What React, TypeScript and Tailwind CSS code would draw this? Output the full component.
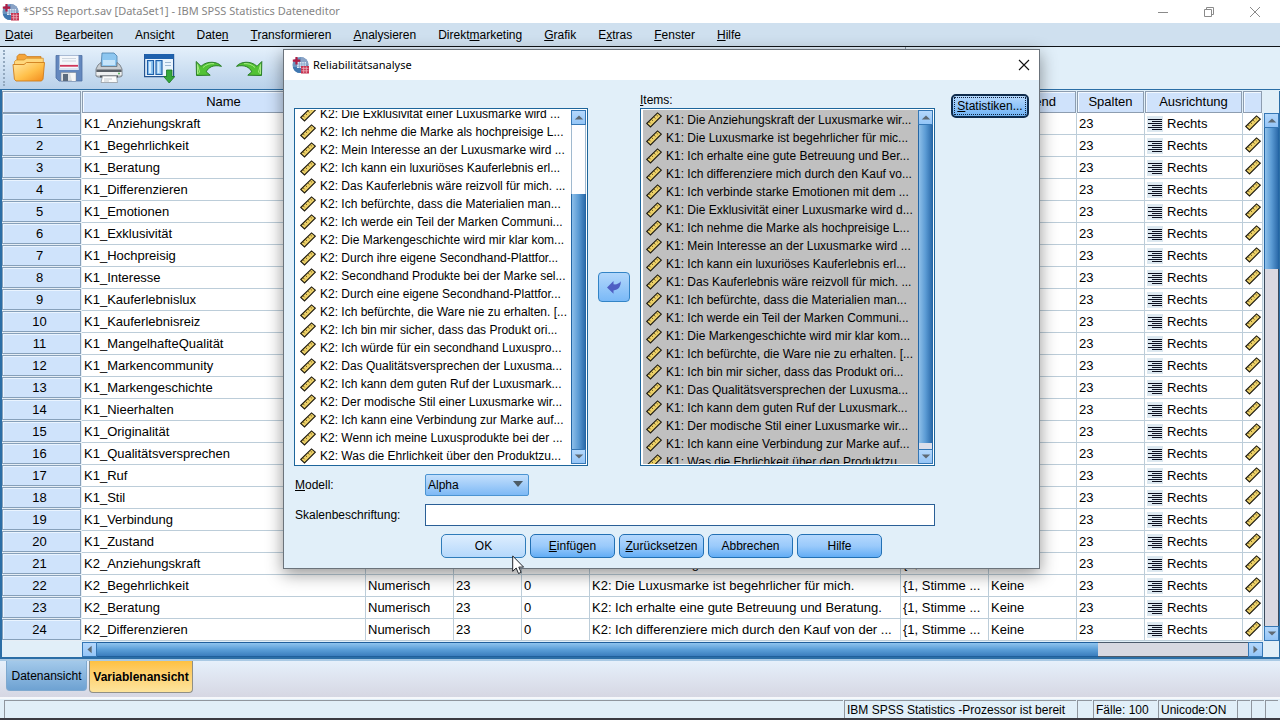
import type { ReactNode } from "react";

const K1 = [
  "Anziehungskraft", "Begehrlichkeit", "Beratung", "Differenzieren", "Emotionen", "Exklusivität", "Hochpreisig",
  "Interesse", "Kauferlebnislux", "Kauferlebnisreiz", "MangelhafteQualität", "Markencommunity", "Markengeschichte",
  "Nieerhalten", "Originalität", "Qualitätsversprechen", "Ruf", "Stil", "Verbindung", "Zustand",
];
const K2 = ["Anziehungskraft", "Begehrlichkeit", "Beratung", "Differenzieren"];

const K2_LABELS = [
  "K2: Die Anziehungskraft der Luxusmarke wird ...",
  "K2: Die Luxusmarke ist begehrlicher für mich.",
  "K2: Ich erhalte eine gute Betreuung und Beratung.",
  "K2: Ich differenziere mich durch den Kauf von der ...",
];

const VARIABLES = [
  ...K1.map((n) => ({ name: `K1_${n}`, label: "" })),
  ...K2.map((n, i) => ({ name: `K2_${n}`, label: K2_LABELS[i] })),
];

const SOURCE = [
  "K2: Die Exklusivität einer Luxusmarke wird ...",
  "K2: Ich nehme die Marke als hochpreisige L...",
  "K2: Mein Interesse an der Luxusmarke wird ...",
  "K2: Ich kann ein luxuriöses Kauferlebnis erl...",
  "K2: Das Kauferlebnis wäre reizvoll für mich. ...",
  "K2: Ich befürchte, dass die Materialien man...",
  "K2: Ich werde ein Teil der Marken Communi...",
  "K2: Die Markengeschichte wird mir klar kom...",
  "K2: Durch ihre eigene Secondhand-Plattfor...",
  "K2: Secondhand Produkte bei der Marke sel...",
  "K2: Durch eine eigene Secondhand-Plattfor...",
  "K2: Ich befürchte, die Ware nie zu erhalten. [...",
  "K2: Ich bin mir sicher, dass das Produkt ori...",
  "K2: Ich würde für ein secondhand Luxuspro...",
  "K2: Das Qualitätsversprechen der Luxusma...",
  "K2: Ich kann dem guten Ruf der Luxusmark...",
  "K2: Der modische Stil einer Luxusmarke wir...",
  "K2: Ich kann eine Verbindung zur Marke auf...",
  "K2: Wenn ich meine Luxusprodukte bei der ...",
  "K2: Was die Ehrlichkeit über den Produktzu...",
];

const ITEMS = [
  "K1: Die Anziehungskraft der Luxusmarke wir...",
  "K1: Die Luxusmarke ist begehrlicher für mic...",
  "K1: Ich erhalte eine gute Betreuung und Ber...",
  "K1: Ich differenziere mich durch den Kauf vo...",
  "K1: Ich verbinde starke Emotionen mit dem ...",
  "K1: Die Exklusivität einer Luxusmarke wird d...",
  "K1: Ich nehme die Marke als hochpreisige L...",
  "K1: Mein Interesse an der Luxusmarke wird ...",
  "K1: Ich kann ein luxuriöses Kauferlebnis erl...",
  "K1: Das Kauferlebnis wäre reizvoll für mich. ...",
  "K1: Ich befürchte, dass die Materialien man...",
  "K1: Ich werde ein Teil der Marken Communi...",
  "K1: Die Markengeschichte wird mir klar kom...",
  "K1: Ich befürchte, die Ware nie zu erhalten. [...",
  "K1: Ich bin mir sicher, dass das Produkt ori...",
  "K1: Das Qualitätsversprechen der Luxusma...",
  "K1: Ich kann dem guten Ruf der Luxusmark...",
  "K1: Der modische Stil einer Luxusmarke wir...",
  "K1: Ich kann eine Verbindung zur Marke auf...",
  "K1: Was die Ehrlichkeit über den Produktzu...",
];

/* [before, mnemonic, after] */
const MENUS = [
  ["", "D", "atei"], ["B", "e", "arbeiten"], ["Ansi", "c", "ht"], ["Date", "n", ""], ["", "T", "ransformieren"],
  ["", "A", "nalysieren"], ["Direkt", "m", "arketing"], ["", "G", "rafik"], ["E", "x", "tras"], ["", "F", "enster"],
  ["", "H", "ilfe"],
];

function AppLogo() {
  return (
    <svg width="18" height="18" viewBox="0 0 18 18" className="shrink-0" aria-hidden="true">
      <circle cx="8.500" cy="9" r="8" fill="#6b94be" />
      <path d="M9 1a8 8 0 0 1 7.500 8H9z" fill="#8aa3c6" />
      <path d="M.8 11h8v6A8 8 0 0 1 .8 11z" fill="#3f77b0" />
      <rect x="5" y="6" width="9" height="6" fill="#dfe9f5" />
      <path d="M5 8h9M5 10.200h9M7.400 6v6M9.800 6v6M12.200 6v6" stroke="#7f9fc6" strokeWidth=".8" />
      <rect x="9" y="10" width="8" height="7.500" fill="#c43250" />
      <path d="M9.500 12.300h7M9.500 14.800h7M11.700 10.500v6.500M14.300 10.500v6.500" stroke="#efb4bf" strokeWidth=".8" />
      <path d="M4.500 1v7.400M.8 4.700h7.400" stroke="#b01c44" strokeWidth="2.200" />
    </svg>
  );
}

function Ruler() {
  return (
    <svg width="16" height="16" viewBox="0 0 16 16" className="shrink-0" aria-hidden="true">
      <path d="M.7 11.500 11.500.9l3.800 3.300L4.500 14.900z" fill="#ecd067" stroke="#1d1a10" strokeWidth="1.100" />
      <path d="m3.200 9.900 1.400 1.400M5.600 7.500 7 8.900M8 5.100l1.400 1.400M10.400 2.800l1.400 1.400" stroke="#5e4c1a" strokeWidth=".9" />
    </svg>
  );
}

function AlignRight() {
  return (
    <svg width="16" height="16" viewBox="0 0 16 16" className="shrink-0" aria-hidden="true">
      <rect width="16" height="16" fill="#dce8f0" />
      <path d="M1 3.500h14M5 5.500h10M1 7.500h14M5 9.500h10M1 11.500h14M5 13.500h10" stroke="#0c1020" strokeWidth="1" />
    </svg>
  );
}

function ToolbarIcon({ name }: { name: string }) {
  if (name === "Öffnen")
    return (
      <svg width="34" height="34" viewBox="0 0 34 34" aria-hidden="true">
        <defs>
          <linearGradient id="folder" x1="0" y1="0" x2="1" y2="1">
            <stop offset="0" stopColor="#ffe9a8" />
            <stop offset=".55" stopColor="#ffc04a" />
            <stop offset="1" stopColor="#f28a1c" />
          </linearGradient>
        </defs>
        <path d="M5 28V5.500l2-2.200h6l2 2.300h14v20z" fill="#f5a53a" stroke="#c97a1a" strokeWidth=".8" />
        <path d="M5.500 9h24v3h-24z" fill="#fff7de" />
        <path d="M2.500 10.500 4 9h8l2.500-1.800h16.800V15H2.500z" fill="#ffd77c" stroke="#d08a24" strokeWidth=".7" />
        <path d="M1 13.500h11l2.500-2h18L31 28.200 29.500 30H4l-1.600-1.800z" fill="url(#folder)" stroke="#cf7d1b" strokeWidth=".9" />
      </svg>
    );
  if (name === "Speichern")
    return (
      <svg width="28" height="28" viewBox="0 0 28 28" aria-hidden="true">
        <path d="M1 1.500h26V27H4l-3-3z" fill="#6488be" stroke="#4f70a2" strokeWidth=".8" />
        <path d="M4.500 1.500h19V16h-19z" fill="#f4f7fb" />
        <path d="M7 4.500h14M7 7h14" stroke="#c3ccd8" strokeWidth=".8" />
        <path d="M5 11.800h18" stroke="#cf3558" strokeWidth="1.800" />
        <path d="M4.500 14h19v2h-19z" fill="#d8e2f0" />
        <path d="M6 18.500h15V27H6z" fill="#dfe3e6" stroke="#7d8792" strokeWidth=".5" />
        <path d="M8 20h5v7H8z" fill="#5b6b7d" />
        <path d="M15 19h5.500v8H17z" fill="#f7f7f7" />
      </svg>
    );
  if (name === "Drucken")
    return (
      <svg width="28" height="32" viewBox="0 0 28 32" aria-hidden="true">
        <path d="M7 1h12l3 3v11H6z" fill="#8cc6f0" stroke="#4a7da8" strokeWidth=".8" />
        <path d="M8 8h12v5H8z" fill="#c7e5fa" />
        <path d="M3 13 6 10.500v4h16v-4l3 2.500 2 4v7l-2 1H3l-2-1v-7z" fill="#c9cdd1" stroke="#6c7278" strokeWidth=".8" />
        <path d="M1.500 17.500h25v2.500h-25z" fill="#595f66" />
        <path d="M1.500 20h25v3h-25z" fill="#eef0f1" />
        <path d="M5 23.500h18v2H5z" fill="#4b5056" />
        <path d="M7.500 24h14l1 6.500H6z" fill="#fafbfb" stroke="#8b9197" strokeWidth=".7" />
        <path d="M9 27h8M9 29h5" stroke="#b4bcc4" strokeWidth=".8" />
        <circle cx="24" cy="21.500" r=".9" fill="#48a84a" />
      </svg>
    );
  if (name === "Dialoge")
    return (
      <svg width="32" height="32" viewBox="0 0 32 32" aria-hidden="true">
        <path d="M1.600 2.600h29v22h-29z" fill="#eaf4fd" stroke="#24538f" strokeWidth="1.200" />
        <path d="M1.500 2h29.200v5H1.500z" fill="#1f61ad" />
        <path d="M4.500 8.500h6v14h-6zM13 8.500h6v14h-6z" fill="#8ec4f0" stroke="#1f5fa9" strokeWidth="1.200" />
        <path d="M6 10h2v11H6zM14.500 10h2v11h-2z" fill="#d6ecfd" />
        <path d="M22 10.500h6M22 13.500h6" stroke="#9fb9d2" />
        <path d="M23.500 18h5.500v6.500h2.800L26.200 31l-5.500-6.500h2.800z" fill="#35a83a" stroke="#1c7625" strokeWidth=".8" />
      </svg>
    );
  return (
    <svg
      width="28" height="20" viewBox="0 0 28 20" aria-hidden="true"
      className={name === "Wiederholen" ? "-scale-x-100" : ""}
    >
      <path
        d="M1.200 3.500 1.500 17.500l13.700-.3-4-3.400c2.400-4.800 7.200-7.300 15.300-5.500C22.500 3.300 12 2.500 6 8.300z"
        fill="#52c234" stroke="#2c7d2a" strokeWidth="1" strokeLinejoin="round"
      />
      <path d="M2.500 6.500v9.500l2-2zM8 9.500c3-3 7-4.300 11-3.800" fill="none" stroke="#a5ea84" strokeWidth="1" />
    </svg>
  );
}

const ARROWS = {
  up: "M2 9 7 4l5 5z",
  down: "M2 4h10L7 9z",
  left: "M9 2v9L4 6.500z",
  right: "M4 2v9l5-4.500z",
};

function ScrollButton({ dir, label }: { dir: keyof typeof ARROWS; label: string }) {
  return (
    <button
      type="button"
      aria-label={label}
      className="flex size-[15px] shrink-0 items-center justify-center border border-[#3577b5] bg-linear-to-b from-[#b4d8fc] to-[#94c5f7]"
    >
      <svg width="12" height="11" viewBox="0 0 14 13" aria-hidden="true">
        <path d={ARROWS[dir]} fill="#5e6a74" />
      </svg>
    </button>
  );
}

const V_THUMB = "bg-linear-to-r from-[#8dbfe9] via-[#5b9bd4] to-[#2c6cab] border-x border-[#2466a5]";

function ListBox({ rows, selected, label }: { rows: string[]; selected?: boolean; label: string }) {
  return (
    <div className="flex h-[358px] border border-[#1d659b] bg-white p-px">
      <ul
        aria-label={label}
        className={
          selected
            ? "ml-px min-w-0 flex-1 overflow-hidden bg-[#c0c0c0] pt-px pl-[3px]"
            : "ml-px min-w-0 flex-1 overflow-hidden pl-[3px]"
        }
      >
        {rows.map((r, i) => (
          <li key={i} className={!selected && i === 0 ? "-mt-[5px] flex h-[18px] items-center gap-1" : "flex h-[18px] items-center gap-1"}>
            <Ruler />
            <span className="whitespace-nowrap">{r}</span>
          </li>
        ))}
      </ul>
      <div className="flex w-[15px] shrink-0 flex-col">
        <ScrollButton dir="up" label={`${label} nach oben`} />
        {!selected && <div className="h-[69px] border-x border-[#9fb8cf] bg-[#fdfdff]" />}
        <div className={`flex-1 ${V_THUMB}`} />
        {selected && <div className="h-[6px] border-x border-[#2466a5] bg-[#dcdfea]" />}
        <ScrollButton dir="down" label={`${label} nach unten`} />
      </div>
    </div>
  );
}

function DialogButton({ children, light }: { children: ReactNode; light?: boolean }) {
  return (
    <button
      type="button"
      className={
        light
          ? "h-6 w-[85px] rounded-[5px] border border-[#2f7cba] bg-linear-to-b from-[#deeefe] to-[#b5d8fb]"
          : "h-6 w-[85px] rounded-[5px] border border-[#2270b4] bg-linear-to-b from-[#b5d8fd] via-[#9acafb] to-[#62adf5]"
      }
    >
      {children}
    </button>
  );
}

function ReliabilityDialog() {
  return (
    <div
      role="dialog"
      aria-labelledby="dialog-title"
      className="absolute top-[49px] left-[283px] w-[757px] border border-[#6b737b] bg-[#e1eff9] shadow-[0_5px_16px_rgba(0,0,0,0.42)]"
    >
      <div className="flex h-[30px] items-center bg-white pr-[9px] pl-2 font-['Noto_Sans',sans-serif]">
        <AppLogo />
        <h2 id="dialog-title" className="ml-[3px] flex-1 text-[11px]">Reliabilitätsanalyse</h2>
        <button type="button" aria-label="Schließen">
          <svg width="12" height="12" viewBox="0 0 12 12" aria-hidden="true">
            <path d="m1 1 10 10M11 1 1 11" stroke="#111" strokeWidth="1.100" />
          </svg>
        </button>
      </div>
      <div className="flex items-start px-[10px] pt-3">
        <div className="w-[294px] pt-4">
          <ListBox rows={SOURCE} label="Variablen" />
        </div>
        <button
          type="button"
          aria-label="Verschieben"
          className="mx-[10px] mt-[180px] flex h-[30px] w-8 items-center justify-center rounded-[4px] border border-[#3384c6] bg-linear-to-b from-[#b2d7fb] to-[#7ab9f7]"
        >
          <svg width="16" height="14" viewBox="0 0 16 14" aria-hidden="true">
            <path d="M1 7.500 7.500 1v3.300c3 .4 5.500-.5 7.200-3C15 6.500 12.500 10.200 7.500 10.400v3.300z" fill="#4f5fc4" />
          </svg>
        </button>
        <div className="w-[295px]">
          <div className="h-4 leading-4"><u>I</u>tems:</div>
          <ListBox rows={ITEMS} label="Items" selected />
        </div>
        <button
          type="button"
          className="mt-[2px] ml-auto h-6 w-[78px] rounded-[5px] border-2 border-[#0f2c4d] bg-linear-to-b from-[#b5d8fd] to-[#6fb3f5] p-px"
        >
          <span className="flex h-full items-center justify-center border border-dotted border-[#10233c]">
            <span><u>S</u>tatistiken...</span>
          </span>
        </button>
      </div>
      <div className="flex flex-col pt-2 pr-[104px] pl-[11px]">
        <div className="flex items-center">
          <label htmlFor="model" className="w-[130px]"><u>M</u>odell:</label>
          <div className="relative">
            <select
              id="model"
              className="h-[22px] w-[104px] appearance-none rounded-[2px] border border-[#4b94d2] bg-linear-to-b from-[#c3dffc] to-[#7db9f5] pl-[2px]"
            >
              <option>Alpha</option>
            </select>
            <svg width="10" height="6" viewBox="0 0 10 6" className="pointer-events-none absolute top-[7px] right-[6px]" aria-hidden="true">
              <path d="M0 0h10L5 6z" fill="#4d5c66" />
            </svg>
          </div>
        </div>
        <div className="mt-2 flex items-center">
          <label htmlFor="scale" className="w-[130px]">Skalenbeschriftung:</label>
          <input id="scale" type="text" className="h-[22px] min-w-0 flex-1 border border-[#2a5f96] bg-white px-1 outline-none" />
        </div>
      </div>
      <div className="flex justify-center gap-1 pt-2 pb-[10px]">
        <DialogButton light>OK</DialogButton>
        <DialogButton><u>E</u>infügen</DialogButton>
        <DialogButton><u>Z</u>urücksetzen</DialogButton>
        <DialogButton>Abbrechen</DialogButton>
        <DialogButton>Hilfe</DialogButton>
      </div>
    </div>
  );
}

function HeadCell({ children }: { children?: ReactNode }) {
  return (
    <th className="h-[22px] p-0 font-normal">
      <div className="mr-px flex h-[22px] items-center justify-center overflow-hidden border border-[#8d9db0] bg-[#cfe2fb] shadow-[inset_1px_1px_0_#f2f8ff]">
        {children}
      </div>
    </th>
  );
}

const CELL = "h-[22px] overflow-hidden border-r border-b border-[#bccdd9] bg-white p-0 pl-[2px] align-top leading-[21px] whitespace-nowrap";

function VariableTable() {
  return (
    <table className="w-full table-fixed border-separate border-spacing-0 text-[13px]">
      <colgroup>
        <col className="w-[80px]" />
        <col className="w-[284px]" />
        <col className="w-[88px]" />
        <col className="w-[68px]" />
        <col className="w-[68px]" />
        <col />
        <col className="w-[88px]" />
        <col className="w-[88px]" />
        <col className="w-[68px]" />
        <col className="w-[98px]" />
        <col className="w-[20px]" />
      </colgroup>
      <thead>
        <tr>
          <HeadCell />
          <HeadCell>Name</HeadCell>
          <HeadCell />
          <HeadCell />
          <HeadCell />
          <HeadCell />
          <HeadCell />
          <HeadCell>Fehlend</HeadCell>
          <HeadCell>Spalten</HeadCell>
          <HeadCell>Ausrichtung</HeadCell>
          <HeadCell />
        </tr>
      </thead>
      <tbody>
        {VARIABLES.map((v, i) => (
          <tr key={v.name}>
            <th scope="row" className="h-[22px] border-r border-b border-[#e6eef5] bg-white p-0 font-normal">
              <div className="flex h-[21px] items-center justify-center border border-[#86a0ba] bg-[#cfe3fb] pr-1 leading-5 shadow-[inset_1px_1px_0_#eaf4ff]">
                {i + 1}
              </div>
            </th>
            <td className={CELL}>{v.name}</td>
            <td className={CELL}>{v.label && "Numerisch"}</td>
            <td className={CELL}>{v.label && "23"}</td>
            <td className={CELL}>{v.label && "0"}</td>
            <td className={CELL}>{v.label}</td>
            <td className={CELL}>{v.label && "{1, Stimme ..."}</td>
            <td className={CELL}>{v.label && "Keine"}</td>
            <td className={CELL}>23</td>
            <td className={CELL}>
              <div className="flex items-center gap-1">
                <AlignRight />
                Rechts
              </div>
            </td>
            <td className={CELL}>
              <div className="flex h-5 items-center"><Ruler /></div>
            </td>
          </tr>
        ))}
      </tbody>
    </table>
  );
}

const STATUS = "flex items-center border-t border-l border-[#8f969e] pl-[2px] whitespace-nowrap";

export default function App() {
  return (
    <div className="relative flex min-h-screen flex-col overflow-hidden bg-[#e1eff8] font-['Liberation_Sans',Arial,sans-serif] text-xs text-black">
      <header className="flex h-[23px] items-center bg-white pl-[2px] font-['Noto_Sans',sans-serif]">
        <AppLogo />
        <h1 className="ml-[3px] flex-1 text-[11px] text-[#858585]">*SPSS Report.sav [DataSet1] - IBM SPSS Statistics Dateneditor</h1>
        <div className="flex items-center gap-[34px] pr-[19px]">
          <button type="button" aria-label="Minimieren">
            <svg width="12" height="12" viewBox="0 0 12 12" aria-hidden="true"><path d="M1 6.500h10" stroke="#8a8a8a" /></svg>
          </button>
          <button type="button" aria-label="Wiederherstellen">
            <svg width="12" height="12" viewBox="0 0 12 12" fill="none" stroke="#8a8a8a" aria-hidden="true">
              <path d="M1.500 3.500h7v7h-7zM3.500 3.500v-2h7v7h-2" />
            </svg>
          </button>
          <button type="button" aria-label="Schließen">
            <svg width="12" height="12" viewBox="0 0 12 12" aria-hidden="true"><path d="m1 1 10 10M11 1 1 11" stroke="#8a8a8a" /></svg>
          </button>
        </div>
      </header>

      <nav className="flex h-6 items-center gap-[22px] border-b border-[#101418] bg-[#cfe0ef] pl-[5px]">
        {MENUS.map(([a, b, c]) => (
          <button key={a + b + c} type="button">{a}<u>{b}</u>{c}</button>
        ))}
      </nav>

      <div className="flex h-[42px] items-center bg-[#e1eff9]">
        <div className="flex h-full w-[906px] items-center border-r border-[#8b97a3] bg-linear-to-b from-[#e4f0fb] to-[#b9d1ea] pl-[3px]">
          <div className="h-9 border-l-2 border-dotted border-[#93a9bf]" />
          <div className="ml-[7px] flex items-center">
            <button type="button" aria-label="Öffnen"><ToolbarIcon name="Öffnen" /></button>
            <button type="button" aria-label="Speichern" className="ml-[9px]"><ToolbarIcon name="Speichern" /></button>
            <button type="button" aria-label="Drucken" className="ml-3"><ToolbarIcon name="Drucken" /></button>
            <button type="button" aria-label="Dialoge" className="ml-5"><ToolbarIcon name="Dialoge" /></button>
            <button type="button" aria-label="Rückgängig" className="ml-5"><ToolbarIcon name="Rückgängig" /></button>
            <button type="button" aria-label="Wiederholen" className="ml-3"><ToolbarIcon name="Wiederholen" /></button>
          </div>
        </div>
      </div>

      <main className="border-t border-b-2 border-l-2 border-[#2b6ea6] pt-px shadow-[0_2px_0_#a9c9e4]">
        <div className="flex">
          <div className="min-w-0 flex-1"><VariableTable /></div>
          <div className="flex w-[17px] flex-col border-r border-[#2b6ea6] pt-[22px] pl-px">
            <ScrollButton dir="up" label="Nach oben" />
            <div className={`h-[141px] w-[15px] ${V_THUMB}`} />
            <div className="w-[15px] flex-1 border-x border-[#3a4a5c] bg-[#d9d8e1]" />
            <ScrollButton dir="down" label="Nach unten" />
          </div>
        </div>
        <div className="flex border-r border-[#2b6ea6] pt-px pr-4 pl-20">
          <ScrollButton dir="left" label="Nach links" />
          <div className="flex-[1002] border-y border-[#1f5f9c] bg-linear-to-b from-[#8fc4ee] via-[#5b9fd8] to-[#3a7dbd]" />
          <div className="flex-[150] border-y border-[#4b5a6c] bg-[#d7d8e1]" />
          <ScrollButton dir="right" label="Nach rechts" />
        </div>
      </main>

      <div className="mt-[2px] flex h-[38px] items-start gap-[2px] border-b-2 border-[#f6f8fb] bg-linear-to-b from-[#e6f0fb] to-[#d6d7e3] pl-[6px]">
        <button type="button" className="h-[30px] w-[81px] rounded-b-[4px] border border-t-0 border-[#7fa9cf] bg-linear-to-b from-[#a3c9ea] to-[#6ea2d2] whitespace-nowrap">Datenansicht</button>
        <button type="button" className="h-8 w-[104px] rounded-b-[4px] border border-t-0 border-[#8f8f86] bg-linear-to-b from-[#fdc142] to-[#fde49c] font-bold whitespace-nowrap">Variablenansicht</button>
      </div>

      <footer className="mt-auto flex h-5 gap-px border-b-2 border-[#3b3b42] pr-[2px] pl-1">
        <div className={`${STATUS} flex-1`} />
        <div className={`${STATUS} w-[232px]`}>IBM SPSS Statistics -Prozessor ist bereit</div>
        <div className={`${STATUS} w-[15px]`} />
        <div className={`${STATUS} w-16`}>Fälle: 100</div>
        <div className={`${STATUS} w-[78px]`}>Unicode:ON</div>
        <div className={`${STATUS} w-[13px]`} />
        <div className={`${STATUS} w-[13px]`} />
        <div className={`${STATUS} w-[13px]`} />
      </footer>

      <ReliabilityDialog />

      <svg width="13" height="20" viewBox="0 0 13 20" className="pointer-events-none absolute top-[555px] left-[512px]" aria-hidden="true">
        <path d="M.7.900v15.400l3.500-3.300 2.300 5.500 2.600-1.100-2.300-5.300h4.800z" fill="#fff" stroke="#20242a" strokeWidth="1" />
      </svg>
    </div>
  );
}
